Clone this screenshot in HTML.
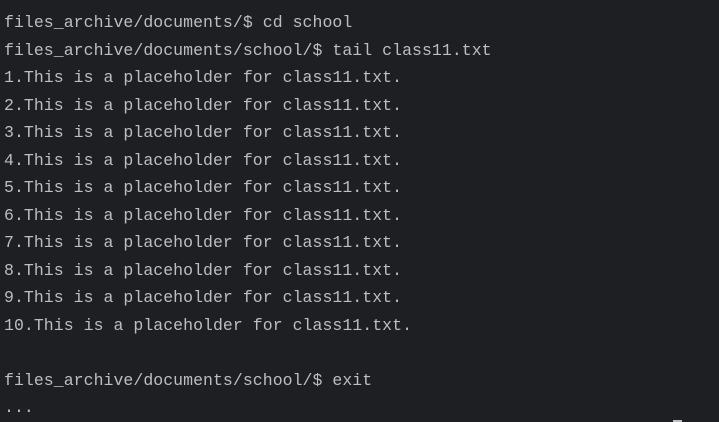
<!DOCTYPE html>
<html><head><style>
html,body{margin:0;padding:0;background:#1e1f22;width:719px;height:422px;overflow:hidden}
pre{position:absolute;left:4px;top:-18.5px;margin:0;font-family:"Liberation Mono",monospace;font-size:16.5px;line-height:27.5px;color:#bcbec4;letter-spacing:0.05px}
.cur{position:absolute;left:673px;top:420px;width:9px;height:2px;background:#bcbec4}
</style></head><body>
<pre>school
files_archive/documents/$ cd school
files_archive/documents/school/$ tail class11.txt
1.This is a placeholder for class11.txt.
2.This is a placeholder for class11.txt.
3.This is a placeholder for class11.txt.
4.This is a placeholder for class11.txt.
5.This is a placeholder for class11.txt.
6.This is a placeholder for class11.txt.
7.This is a placeholder for class11.txt.
8.This is a placeholder for class11.txt.
9.This is a placeholder for class11.txt.
10.This is a placeholder for class11.txt.

files_archive/documents/school/$ exit
...</pre>
<div class="cur"></div>
</body></html>
